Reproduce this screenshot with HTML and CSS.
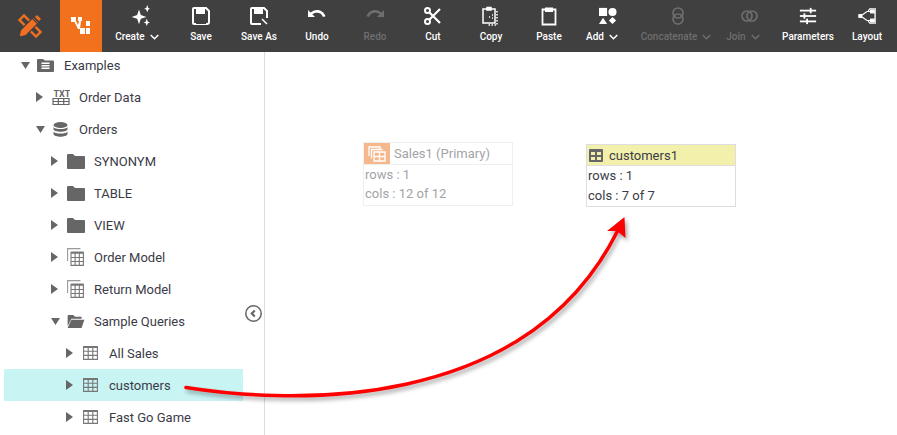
FILE: index.html
```html
<!DOCTYPE html>
<html lang="en">
<head>
  <meta charset="UTF-8" />
  <title>Data Worksheet</title>
  <link rel="stylesheet" href="styles.css">
</head>
<body>
  <header class="toolbar">
    <div class="logo-cell">
      <svg width="24" height="24" viewBox="0 0 24 24" fill="none" stroke="#f26f21">
        <path d="M1.500 6 6 1.500 22.500 18 18 22.500Z" stroke-width="2.400"/>
        <path d="M1 23l1.500-7L15.500 3l5.500 5.500L8 21.500Z" fill="#f26f21" stroke="#404040" stroke-width="1.200"/>
        <path d="M14.500 4.500l5 5" stroke="#404040" stroke-width="1.200"/>
        <path d="M17 3l2-2 4 4-2 2Z" fill="#f26f21" stroke="none"/>
      </svg>
    </div>
    <div class="app-cell">
      <svg width="20" height="20" viewBox="0 0 20 20" fill="#fff">
        <rect x="0" y="1" width="5" height="5"/><rect x="7" y="1" width="4" height="4"/>
        <path d="M3 5l4 8h2l1-8H8l-1 4-2-4Z"/>
        <rect x="9" y="12" width="5" height="6"/><rect x="15" y="5" width="4" height="5"/><rect x="15" y="12" width="4" height="6"/>
      </svg>
    </div>

    <button class="tool w-create">
      <svg class="ico ico-create" width="24" height="24" viewBox="0 0 24 24" fill="#fff">
        <path d="M12 5l2 6 6 2-6 2-2 6-2-6-6-2 6-2Z"/>
        <path d="M21 0l1.200 3.300 1.800.7-1.800.8L21 8l-1.200-3.200L17.500 4l2.300-.7Z"/>
        <path d="M20.500 15l1.200 3.300 2.300.7-2.300.8-1.200 3.200-1.200-3.200-2.300-.8 2.300-.7Z"/>
      </svg>
      <span class="lbl">Create <svg class="chev" width="9" height="6" viewBox="0 0 9 6"><path d="M.7 1l3.800 3.800L8.300 1" fill="none" stroke="currentColor" stroke-width="1.500"/></svg></span>
    </button>
    <button class="tool w-std">
      <svg class="ico" width="20" height="20" viewBox="0 0 20 20" fill="none" stroke="#fff" stroke-width="2">
        <path d="M3 2h12l3 3v11a2 2 0 0 1-2 2H3a1 1 0 0 1-1-1V3a1 1 0 0 1 1-1Z"/>
        <path d="M5 2h9v6H5Z" fill="#fff" stroke="none"/>
        <path d="M5 12h10v6H5Z" fill="#404040" stroke="none"/>
      </svg>
      <span class="lbl">Save</span>
    </button>
    <button class="tool w-std">
      <svg class="ico" width="20" height="20" viewBox="0 0 20 20" fill="none" stroke="#fff" stroke-width="2">
        <path d="M12 18H3a1 1 0 0 1-1-1V3a1 1 0 0 1 1-1h12l3 3v7"/>
        <path d="M5 2h9v6H5Z" fill="#fff" stroke="none"/>
        <path d="M13 13l5 5" stroke-width="1.500"/>
      </svg>
      <span class="lbl">Save As</span>
    </button>
    <button class="tool w-std">
      <svg class="ico" width="20" height="20" viewBox="0 0 20 20" fill="#fff">
        <path d="M1 4v7h7L5.300 8.300C7 7 8.500 6.700 10 6.700c2.800 0 5 1.500 6 4.300l2.500-.8C17 6.500 14 4 10 4 8 4 6 4.800 3.500 6.500Z"/>
      </svg>
      <span class="lbl">Undo</span>
    </button>
    <button class="tool w-std off">
      <svg class="ico" width="20" height="20" viewBox="0 0 20 20" fill="#6e6e6e">
        <path d="M19 4v7h-7l2.700-2.700C13 7 11.500 6.700 10 6.700c-2.800 0-5 1.500-6 4.300l-2.500-.8C3 6.500 6 4 10 4c2 0 4 .8 6.500 2.500Z"/>
      </svg>
      <span class="lbl">Redo</span>
    </button>
    <button class="tool w-std">
      <svg class="ico" width="20" height="20" viewBox="0 0 20 20" fill="none" stroke="#fff" stroke-width="2">
        <circle cx="4.500" cy="4.500" r="2.500"/><circle cx="4.500" cy="15.500" r="2.500"/>
        <path d="M6.500 6.500 17 17M6.500 13.500 17 3" stroke-width="2.200"/>
      </svg>
      <span class="lbl">Cut</span>
    </button>
    <button class="tool w-std">
      <svg class="ico" width="20" height="20" viewBox="0 0 20 20" fill="none" stroke="#fff" stroke-width="1.500">
        <path d="M6 3H2v14h12V3h-4"/>
        <path d="M6 1.500h4V4H6Z" fill="#fff"/>
        <path d="M8 11h1M11 9h1M11 12h1M16 5v14H6" stroke-dasharray="1.500 1.500"/>
      </svg>
      <span class="lbl">Copy</span>
    </button>
    <button class="tool w-std">
      <svg class="ico" width="20" height="20" viewBox="0 0 20 20" fill="none" stroke="#fff" stroke-width="1.800">
        <path d="M6 3.500H3.500V18.500H16.500V3.500H14"/>
        <path d="M6 1.500h8V6H6Z" fill="#fff" stroke="none"/>
      </svg>
      <span class="lbl">Paste</span>
    </button>
    <button class="tool w-add">
      <svg class="ico ico-shift" width="18" height="18" viewBox="0 0 20 20" fill="#fff">
        <rect x="0" y="1" width="9" height="9"/><circle cx="15" cy="5.500" r="4.500"/>
        <path d="M4.500 12 9 19H0Z"/><path d="M15 11l4 4-4 4-4-4Z"/>
      </svg>
      <span class="lbl">Add <svg class="chev" width="9" height="6" viewBox="0 0 9 6"><path d="M.7 1l3.800 3.800L8.300 1" fill="none" stroke="currentColor" stroke-width="1.500"/></svg></span>
    </button>
    <button class="tool w-concat off">
      <svg class="ico ico-nudge" width="14" height="18" viewBox="0 0 14 18" fill="none" stroke="#6e6e6e" stroke-width="1.700">
        <circle cx="7" cy="6" r="5"/><circle cx="7" cy="12" r="5"/>
      </svg>
      <span class="lbl">Concatenate <svg class="chev" width="9" height="6" viewBox="0 0 9 6"><path d="M.7 1l3.800 3.800L8.300 1" fill="none" stroke="currentColor" stroke-width="1.500"/></svg></span>
    </button>
    <button class="tool w-join off">
      <svg class="ico ico-shift" width="17" height="13" viewBox="0 0 17 13" fill="none" stroke="#6e6e6e" stroke-width="1.700">
        <circle cx="6" cy="6.500" r="5"/><circle cx="11" cy="6.500" r="5"/>
      </svg>
      <span class="lbl">Join <svg class="chev" width="9" height="6" viewBox="0 0 9 6"><path d="M.7 1l3.800 3.800L8.300 1" fill="none" stroke="currentColor" stroke-width="1.500"/></svg></span>
    </button>
    <button class="tool w-params">
      <svg class="ico" width="18" height="18" viewBox="0 0 20 20" fill="#fff">
        <rect x="1" y="3" width="18" height="2"/><rect x="1" y="9" width="18" height="2"/><rect x="1" y="15" width="18" height="2"/>
        <rect x="12" y="1" width="2" height="6"/><rect x="5" y="7" width="2" height="6"/><rect x="8" y="13" width="2" height="6"/>
      </svg>
      <span class="lbl">Parameters</span>
    </button>
    <button class="tool w-layout">
      <svg class="ico" width="18" height="18" viewBox="0 0 20 20" fill="none" stroke="#fff" stroke-width="1.300">
        <path d="M3 10 10 5h5M3 10l7 5h5M11 5l2-3h5M11 15l2 3h5"/>
        <rect x="1" y="8.500" width="3" height="3" fill="#fff"/>
        <rect x="14" y="3.500" width="4" height="3" fill="#fff"/>
        <rect x="14" y="13.500" width="4" height="3" fill="#fff"/>
        <path d="M19 1v18" stroke-width="1.500"/>
      </svg>
      <span class="lbl">Layout</span>
    </button>
  </header>

  <main class="workspace">
    <aside class="sidebar">
      <ul class="tree">
        <li class="row d0">
          <span class="caret"><svg width="9" height="7" viewBox="0 0 9 7"><path d="M0 0h9L4.500 7Z"/></svg></span>
          <span class="node-ico"><svg width="17" height="13" viewBox="0 0 17 13"><path d="M1 0h5l2 1.500h8a1 1 0 0 1 1 1V12a1 1 0 0 1-1 1H1a1 1 0 0 1-1-1V1a1 1 0 0 1 1-1Z" fill="#666"/><path d="M4.500 3.500h8v1.600h-8ZM4.500 6h8v1.600h-8ZM4.500 8.500h8v1.600h-8Z" fill="#fff"/></svg></span>
          <span>Examples</span>
        </li>
        <li class="row d1">
          <span class="caret"><svg width="7" height="10" viewBox="0 0 7 10"><path d="M0 0l7 5-7 5Z"/></svg></span>
          <span class="node-ico"><svg width="18" height="16" viewBox="0 0 18 16" fill="none" stroke="#666"><path d="M1 9.500h16v6H1ZM1 12.500h16M6.300 9.500v6M11.700 9.500v6" stroke-width="1.200"/><text x="1.500" y="7.500" class="txt-mark">TXT</text></svg></span>
          <span>Order Data</span>
        </li>
        <li class="row d1">
          <span class="caret"><svg width="9" height="7" viewBox="0 0 9 7"><path d="M0 0h9L4.500 7Z"/></svg></span>
          <span class="node-ico"><svg class="db-mark" width="15" height="15" viewBox="0 0 15 15" fill="#666"><ellipse cx="7.500" cy="3" rx="7" ry="3"/><path d="M.5 5c1 2.800 13 2.800 14 0v2.500c-1 3-13 3-14 0Z"/><path d="M.5 9.500c1 2.800 13 2.800 14 0V12c-1 3.600-13 3.600-14 0Z"/></svg></span>
          <span>Orders</span>
        </li>
        <li class="row d2">
          <span class="caret"><svg width="7" height="10" viewBox="0 0 7 10"><path d="M0 0l7 5-7 5Z"/></svg></span>
          <span class="node-ico"><svg width="18" height="15" viewBox="0 0 18 15"><path d="M1 0h5l2 2h9a1 1 0 0 1 1 1v11a1 1 0 0 1-1 1H1a1 1 0 0 1-1-1V1a1 1 0 0 1 1-1Z" fill="#666"/></svg></span>
          <span>SYNONYM</span>
        </li>
        <li class="row d2">
          <span class="caret"><svg width="7" height="10" viewBox="0 0 7 10"><path d="M0 0l7 5-7 5Z"/></svg></span>
          <span class="node-ico"><svg width="18" height="15" viewBox="0 0 18 15"><path d="M1 0h5l2 2h9a1 1 0 0 1 1 1v11a1 1 0 0 1-1 1H1a1 1 0 0 1-1-1V1a1 1 0 0 1 1-1Z" fill="#666"/></svg></span>
          <span>TABLE</span>
        </li>
        <li class="row d2">
          <span class="caret"><svg width="7" height="10" viewBox="0 0 7 10"><path d="M0 0l7 5-7 5Z"/></svg></span>
          <span class="node-ico"><svg width="18" height="15" viewBox="0 0 18 15"><path d="M1 0h5l2 2h9a1 1 0 0 1 1 1v11a1 1 0 0 1-1 1H1a1 1 0 0 1-1-1V1a1 1 0 0 1 1-1Z" fill="#666"/></svg></span>
          <span>VIEW</span>
        </li>
        <li class="row d2">
          <span class="caret"><svg width="7" height="10" viewBox="0 0 7 10"><path d="M0 0l7 5-7 5Z"/></svg></span>
          <span class="node-ico"><svg width="17" height="18" viewBox="0 0 17 18" fill="none" stroke="#777" stroke-width="1.100"><path d="M.6 13V.6h12.800" stroke="#999"/><path d="M4 4.600h12.400v12.800H4ZM4 9.500h12.400M4 13.500h12.400M8.100 4.600v12.800M12.300 4.600v12.800"/><path d="M4 4.600h12.400" stroke-width="2.200"/></svg></span>
          <span>Order Model</span>
        </li>
        <li class="row d2">
          <span class="caret"><svg width="7" height="10" viewBox="0 0 7 10"><path d="M0 0l7 5-7 5Z"/></svg></span>
          <span class="node-ico"><svg width="17" height="18" viewBox="0 0 17 18" fill="none" stroke="#777" stroke-width="1.100"><path d="M.6 13V.6h12.800" stroke="#999"/><path d="M4 4.600h12.400v12.800H4ZM4 9.500h12.400M4 13.500h12.400M8.100 4.600v12.800M12.300 4.600v12.800"/><path d="M4 4.600h12.400" stroke-width="2.200"/></svg></span>
          <span>Return Model</span>
        </li>
        <li class="row d2">
          <span class="caret"><svg width="9" height="7" viewBox="0 0 9 7"><path d="M0 0h9L4.500 7Z"/></svg></span>
          <span class="node-ico"><svg width="18" height="13" viewBox="0 0 18 14" fill="#666"><path d="M0 1a1 1 0 0 1 1-1h5l2 2h7v2H4L0 12Z"/><path d="M4 5h14l-3 9H0Z"/></svg></span>
          <span>Sample Queries</span>
        </li>
        <li class="row d3">
          <span class="caret"><svg width="7" height="10" viewBox="0 0 7 10"><path d="M0 0l7 5-7 5Z"/></svg></span>
          <span class="node-ico"><svg class="grid-ico" width="15" height="14" viewBox="0 0 15 14" fill="none" stroke="#777" stroke-width="1.100"><path d="M.6.600h13.800v12.800H.6ZM.6 5.300h13.800M.6 9.400h13.800M5.200.6v12.800M9.800.6v12.800"/><path d="M.6 1h13.800" stroke-width="2"/></svg></span>
          <span>All Sales</span>
        </li>
        <li class="row d3 selected">
          <span class="caret"><svg width="7" height="10" viewBox="0 0 7 10"><path d="M0 0l7 5-7 5Z"/></svg></span>
          <span class="node-ico"><svg class="grid-ico" width="15" height="14" viewBox="0 0 15 14" fill="none" stroke="#777" stroke-width="1.100"><path d="M.6.600h13.800v12.800H.6ZM.6 5.300h13.800M.6 9.400h13.800M5.200.6v12.800M9.800.6v12.800"/><path d="M.6 1h13.800" stroke-width="2"/></svg></span>
          <span>customers</span>
        </li>
        <li class="row d3">
          <span class="caret"><svg width="7" height="10" viewBox="0 0 7 10"><path d="M0 0l7 5-7 5Z"/></svg></span>
          <span class="node-ico"><svg class="grid-ico" width="15" height="14" viewBox="0 0 15 14" fill="none" stroke="#777" stroke-width="1.100"><path d="M.6.600h13.800v12.800H.6ZM.6 5.300h13.800M.6 9.400h13.800M5.200.6v12.800M9.800.6v12.800"/><path d="M.6 1h13.800" stroke-width="2"/></svg></span>
          <span>Fast Go Game</span>
        </li>
      </ul>
      <span class="collapse">
        <svg width="17" height="17" viewBox="0 0 17 17" fill="none" stroke="#666"><circle cx="8.500" cy="8.500" r="7.700" stroke-width="1.500"/><path d="M9.800 5.500 6.800 8.500l3 3" stroke-width="2.200"/></svg>
      </span>
    </aside>

    <section class="canvas">
      <div class="box box-primary">
        <div class="box-head">
          <span class="primary-mark">
            <svg width="18" height="16" viewBox="0 0 18 16" fill="none" stroke="#fff" stroke-width="1.300"><path d="M1 10V1h11v2"/><path d="M3.500 12.500v-9h11"/><path d="M6 6h11v9H6ZM6 10.500h11M11.500 6v9"/></svg>
          </span>
          <span class="box-title">Sales1 (Primary)</span>
        </div>
        <div class="box-body">
          <div>rows : 1</div>
          <div>cols : 12 of 12</div>
        </div>
      </div>

      <div class="box box-target">
        <div class="box-head">
          <svg class="grid-mark" width="14" height="13" viewBox="0 0 14 13"><path d="M1 0h12a1 1 0 0 1 1 1v11a1 1 0 0 1-1 1H1a1 1 0 0 1-1-1V1a1 1 0 0 1 1-1Z" fill="#666"/><path d="M2 3h4v3H2ZM8 3h4v3H8ZM2 8h4v3H2ZM8 8h4v3H8Z" fill="#f2f0aa"/></svg>
          <span class="box-title">customers1</span>
        </div>
        <div class="box-body">
          <div>rows : 1</div>
          <div>cols : 7 of 7</div>
        </div>
      </div>
    </section>

    <svg class="drag-arrow" width="897" height="435" viewBox="0 0 897 435" fill="none">
      <path d="M186 387.500C290 404 525 414 617 232" stroke="#f00" stroke-width="3.500" stroke-linecap="round"/>
      <path d="M624.500 217 607 231 617 231 625.500 238Z" fill="#f00"/>
    </svg>
  </main>
</body>
</html>
```

FILE: styles.css
```css
* {
  box-sizing: border-box;
}
html, body {
  height: 100%;
}
body {
  margin: 0;
  font-family: Roboto, "Liberation Sans", sans-serif;
  font-size: 13px;
  color: #3b3b47;
  background-color: #fff;
  overflow: hidden;
  display: flex;
  flex-direction: column;
}

/* top bar */
.toolbar {
  display: flex;
  flex: none;
  height: 52px;
  background-color: #404040;
}
.logo-cell {
  width: 60px;
  display: flex;
  align-items: center;
  justify-content: center;
}
.app-cell {
  width: 42px;
  display: flex;
  align-items: center;
  justify-content: center;
  background-color: #f2711c;
}
.tool {
  flex: none;
  display: flex;
  flex-direction: column;
  align-items: center;
  padding: 5px 0 0;
  border: none;
  background: none;
  color: #fff;
  font-family: inherit;
  font-size: 10px;
  font-weight: 500;
}
.tool .ico {
  height: 22px;
  margin-bottom: 4px;
}
.tool .ico-create {
  margin-left: 4px;
}
.tool .ico-shift {
  margin-left: 12px;
}
.tool .ico-nudge {
  margin-left: 3px;
}
.lbl {
  display: flex;
  align-items: center;
  gap: 5px;
  white-space: nowrap;
}
.tool.off {
  color: #6e6e6e;
}
.w-std {
  width: 58px;
}
.w-create {
  width: 70px;
}
.w-add {
  width: 48px;
}
.w-concat {
  width: 90px;
  margin-left: 5px;
}
.w-join {
  width: 42px;
  margin-left: 1px;
}
.w-params {
  width: 58px;
  margin-left: 15px;
}
.w-layout {
  width: 58px;
  margin-left: 1px;
}

/* left tree */
.workspace {
  flex: 1;
  display: flex;
  position: relative;
  min-height: 0;
}
.sidebar {
  position: relative;
  flex: none;
  width: 265px;
  border-right: 1px solid #dcdcdc;
  overflow: hidden;
}
.tree {
  list-style: none;
  margin: -3px 0 0;
  padding: 0 21px 0 4px;
}
.row {
  display: flex;
  align-items: center;
  height: 32px;
}
.d0 {
  padding-left: 14px;
}
.d1 {
  padding-left: 29px;
}
.d2 {
  padding-left: 44px;
}
.d3 {
  padding-left: 59px;
}
.selected {
  background-color: #c9f4f4;
}
.caret {
  flex: none;
  width: 19px;
  padding-left: 3px;
  display: flex;
  align-items: center;
}
.caret svg {
  fill: #666;
}
.node-ico {
  flex: none;
  width: 27px;
  display: flex;
  align-items: center;
}
.grid-ico {
  margin-left: 1px;
}
.db-mark {
  margin-left: 1px;
}
.txt-mark {
  font-family: Roboto, sans-serif;
  font-size: 9px;
  font-weight: 700;
  fill: #666;
  stroke: none;
}
.collapse {
  position: absolute;
  left: 245px;
  top: 253px;
  display: flex;
}

/* canvas with the two table boxes */
.canvas {
  position: relative;
  flex: 1;
}
.box {
  position: absolute;
  width: 150px;
  background-color: #fff;
}
.box-primary {
  left: 98px;
  top: 90px;
  height: 64px;
  border: 1px solid #efefef;
  color: #a3a3a8;
}
.box-target {
  left: 321px;
  top: 92px;
  height: 63px;
  border: 1px solid #dedede;
}
.box-head {
  display: flex;
  align-items: center;
  border-bottom: 1px solid #efefef;
}
.box-primary .box-head {
  height: 22px;
}
.box-target .box-head {
  height: 21px;
  background-color: #f2f0aa;
  border-bottom-color: #dedede;
}
.primary-mark {
  width: 26px;
  height: 21px;
  display: flex;
  align-items: center;
  justify-content: center;
  background-color: #f5b78c;
}
.box-primary .box-title {
  margin-left: 4px;
}
.grid-mark {
  margin-left: 2px;
}
.box-target .box-title {
  margin-left: 6px;
  color: #3b3b47;
}
.box-body {
  padding: 0 1px;
  line-height: 19px;
}
.box-target .box-body {
  line-height: 20px;
}

/* red drag arrow on top of everything */
.drag-arrow {
  position: absolute;
  left: 0;
  top: -52px;
  pointer-events: none;
  filter: drop-shadow(2px 3px 2px rgba(0, 0, 0, 0.35));
}
```
